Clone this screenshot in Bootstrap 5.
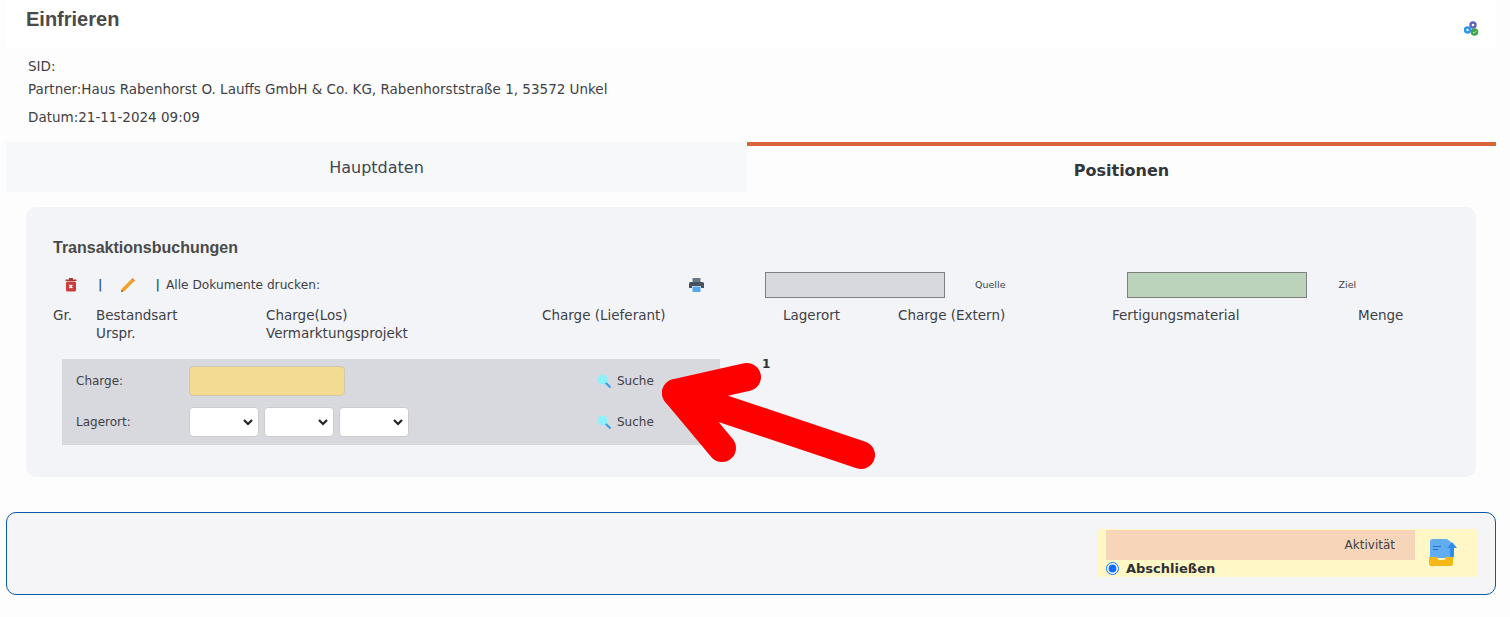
<!DOCTYPE html>
<html lang="de">
<head>
<meta charset="utf-8">
<title>Einfrieren</title>
<link href="https://cdn.jsdelivr.net/npm/bootstrap@5.3.0/dist/css/bootstrap.min.css" rel="stylesheet">
<style>
html,body{height:617px;overflow:hidden}
body{background:#fdfdfd;font-family:"DejaVu Sans",sans-serif;font-size:13.5px;line-height:18px;color:#3f3f46}
.shell{padding:0 14px 0 6px;position:relative}
.headbar{height:47px;background:#fff;padding:7px 0 0 20px}
.headtitle{font:bold 20px/24px "Liberation Sans",sans-serif;color:#4a4a4a;margin:0}
.gear{margin-top:14px;margin-right:16px}
.meta{height:95px;padding-left:22px}
.m1{padding-top:10px}.m2{padding-top:5px}.m3{padding-top:10px}
.tabs{height:50px}
.tab-off{width:741px;background:#f7f8fa;font-size:16px;line-height:52px;color:#3f4650;text-align:center}
.tab-on{flex:1;background:#fdfdfd;border-top:4px solid #d9643a;font-size:16px;font-weight:bold;line-height:50px;color:#33363b;text-align:center}
.panel{margin:15px 20px 0;height:270px;background:#f2f4f8;border-radius:10px;padding:31px 27px 0;position:relative}
.ptitle{font:bold 16px/20px "Liberation Sans",sans-serif;color:#4a4a4a;margin:0}
.tools{height:26px;margin-top:14px;font-size:12.2px}
.ic1{margin-left:11px;width:14px}
.sep{color:#2f5575;font-weight:bold}
.sep1{margin-left:20px}.ic2{margin-left:18px}.sep2{margin-left:20px}
.alld{margin-left:6px}
.printi{margin-left:369px}
.swatch{width:180px;height:26px;border:1px solid #808080}
.sw-a{background:#d8d9de;margin-left:61px}
.sw-b{background:#bad3ba;margin-left:122px}
.swlab{font-size:9.5px;margin-left:30px}
.sw-l2{margin-left:31px}
.cols{display:grid;grid-template-columns:43px 170px 276px 241px 115px 214px 246px 1fr;margin-top:8px}
.searchbox{width:658px;height:86px;margin:17px 0 0 9px;background:#d8d9de;font-size:12px}
.srow1{height:48px;padding-top:7px}
.srow2{height:38px}
.slabel{width:127px;padding:6px 0 0 14px}
.sfield{width:156px;height:30px;background:#f3db91;border:1px solid #cfc7b0;border-radius:4px}
.sselect{width:70px;height:30px;padding:0;border:1px solid #ccc;border-radius:4px;background-image:url("data:image/svg+xml,%3csvg xmlns='http://www.w3.org/2000/svg' viewBox='0 0 10 7'%3e%3cpath fill='none' stroke='%23222' stroke-width='2.200' d='M1 1l4 4 4-4'/%3e%3c/svg%3e");background-position:right 5px center;background-size:10px 7px;margin-right:5px}
.slink{color:#3f3f46;text-decoration:none;padding-top:6px;gap:6px}
.link1{margin-left:252px}
.link2{margin-left:183px}
.num1{position:absolute;left:736px;top:150px;font:bold 12px/14px "DejaVu Sans",sans-serif;color:#333}
.arrow{position:absolute;left:640px;top:340px;pointer-events:none}
.foot{margin-top:35px;height:83px;background:#f5f5f7;border:1px solid #0a5bab;border-radius:10px;padding:16px 17px 0 0}
.act{width:380px;height:48px;background:#fff7c6;padding-left:8px}
.actl{width:309px;padding-top:1px}
.peach{height:30px;background:#f6d5b9;text-align:right;padding:6px 20px 0 0;font-size:12px}
.radio-row{font-weight:bold;font-size:13px;line-height:16px;padding-top:1px;color:#2f3136}
.radio-row input{margin:0 7px 0 0;width:13px;height:13px;vertical-align:-2px;accent-color:#0d6efd}
.acti{margin:10px 0 0 14px}
</style>
</head>
<body>
<div class="shell">
  <div class="headbar d-flex justify-content-between">
    <h1 class="headtitle">Einfrieren</h1>
    <svg class="gear" width="16" height="16" viewBox="0 0 16 16"><circle cx="9" cy="4" r="2.500" fill="#fff" stroke="#5a64c0" stroke-width="2.400"/><circle cx="3.500" cy="9" r="2.500" fill="#fff" stroke="#2c97ef" stroke-width="2.600"/><circle cx="10.500" cy="11" r="3.800" fill="#43a54b"/><path d="M9 11l1.200 1.200L12.300 10" fill="none" stroke="#cfe8d0" stroke-width=".9"/></svg>
  </div>
  <div class="meta">
    <div class="m1">SID:</div>
    <div class="m2">Partner:Haus Rabenhorst O. Lauffs GmbH &amp; Co. KG, Rabenhorststraße 1, 53572 Unkel</div>
    <div class="m3">Datum:21-11-2024 09:09</div>
  </div>
  <div class="tabs d-flex">
    <div class="tab-off">Hauptdaten</div>
    <div class="tab-on">Positionen</div>
  </div>
  <div class="panel">
    <h2 class="ptitle">Transaktionsbuchungen</h2>
    <div class="tools d-flex align-items-center">
      <svg class="ic1" width="12" height="14" viewBox="0 0 12 14"><path d="M4 0h4v1.500h3.500V3H.5V1.500H4z" fill="#a83a36"/><rect x="1" y="3.500" width="10" height="10" rx="1.500" fill="#c9403c"/><path d="M4.300 7l3 3m0-3l-3 3" stroke="#fff" stroke-width="1.300"/></svg>
      <span class="sep sep1">|</span>
      <svg class="ic2" width="15" height="15" viewBox="0 0 15 15"><path d="M1 14l1-3.500L11.500 1 14 3.500 4.500 13z" fill="#f5a02a"/><path d="M11.500 1l1-1L15 2.500l-1 1z" fill="#e9772b"/><path d="M1 14l.6-2.400 1.800 1.800z" fill="#8a5a30"/></svg>
      <span class="sep sep2">|</span>
      <span class="alld">Alle Dokumente drucken:</span>
      <svg class="printi" width="15" height="14" viewBox="0 0 15 14"><path d="M3.500 0h8v4h-8z" fill="#6a7785"/><path d="M1.500 4h12A1.500 1.500 0 0 1 15 5.500V10h-3V8H3v2H0V5.500A1.500 1.500 0 0 1 1.500 4z" fill="#46525e"/><path d="M3.500 8.500h8V14h-8z" fill="#58a6ee"/></svg>
      <div class="swatch sw-a"></div>
      <span class="swlab">Quelle</span>
      <div class="swatch sw-b"></div>
      <span class="swlab sw-l2">Ziel</span>
    </div>
    <div class="cols">
      <div>Gr.</div>
      <div>Bestandsart<br>Urspr.</div>
      <div>Charge(Los)<br>Vermarktungsprojekt</div>
      <div>Charge (Lieferant)</div>
      <div>Lagerort</div>
      <div>Charge (Extern)</div>
      <div>Fertigungsmaterial</div>
      <div>Menge</div>
    </div>
    <div class="searchbox">
      <div class="srow1 d-flex align-items-start">
        <div class="slabel">Charge:</div>
        <div class="sfield"></div>
        <a class="slink link1 d-flex align-items-center" href="#"><svg width="14" height="14" viewBox="0 0 14 14"><path d="M8 8l5.500 5.500" stroke="#3aa0e8" stroke-width="2.200"/><circle cx="5.500" cy="5.500" r="5" fill="#8ef0f8"/></svg>Suche</a>
      </div>
      <div class="srow2 d-flex align-items-start">
        <div class="slabel">Lagerort:</div>
        <select class="form-select sselect" aria-label="Lagerort 1"></select>
        <select class="form-select sselect" aria-label="Lagerort 2"></select>
        <select class="form-select sselect" aria-label="Lagerort 3"></select>
        <a class="slink link2 d-flex align-items-center" href="#"><svg width="14" height="14" viewBox="0 0 14 14"><path d="M8 8l5.500 5.500" stroke="#3aa0e8" stroke-width="2.200"/><circle cx="5.500" cy="5.500" r="5" fill="#8ef0f8"/></svg>Suche</a>
      </div>
    </div>
    <span class="num1">1</span>
  </div>
  <div class="foot d-flex justify-content-end">
    <div class="act d-flex">
      <div class="actl">
        <div class="peach">Aktivität</div>
        <div class="radio-row"><input type="radio" checked aria-label="Abschließen">Abschließen</div>
      </div>
      <svg class="acti" width="28" height="27" viewBox="0 0 28 27"><path d="M1 3a3 3 0 0 1 3-3h14l4 3v16H1z" fill="#62adf2"/><path d="M4 7h8v1H4zM4 10h5v1H4z" fill="#2b6fc4"/><path d="M23 3l5 6h-3v9h-4V9h-3z" fill="#2f8fe8"/><path d="M0 18h8a3 3 0 0 0 3 3h3a3 3 0 0 0 3-3h7v7a2 2 0 0 1-2 2H2a2 2 0 0 1-2-2z" fill="#f4b916"/></svg>
    </div>
  </div>
  <svg class="arrow" width="250" height="140" viewBox="640 340 250 140"><g fill="none" stroke="#f00" stroke-width="28" stroke-linecap="round" stroke-linejoin="round"><path d="M747 377L676 393L722 448"/><path d="M676 393L861 455"/></g></svg>
</div>
</body>
</html>
